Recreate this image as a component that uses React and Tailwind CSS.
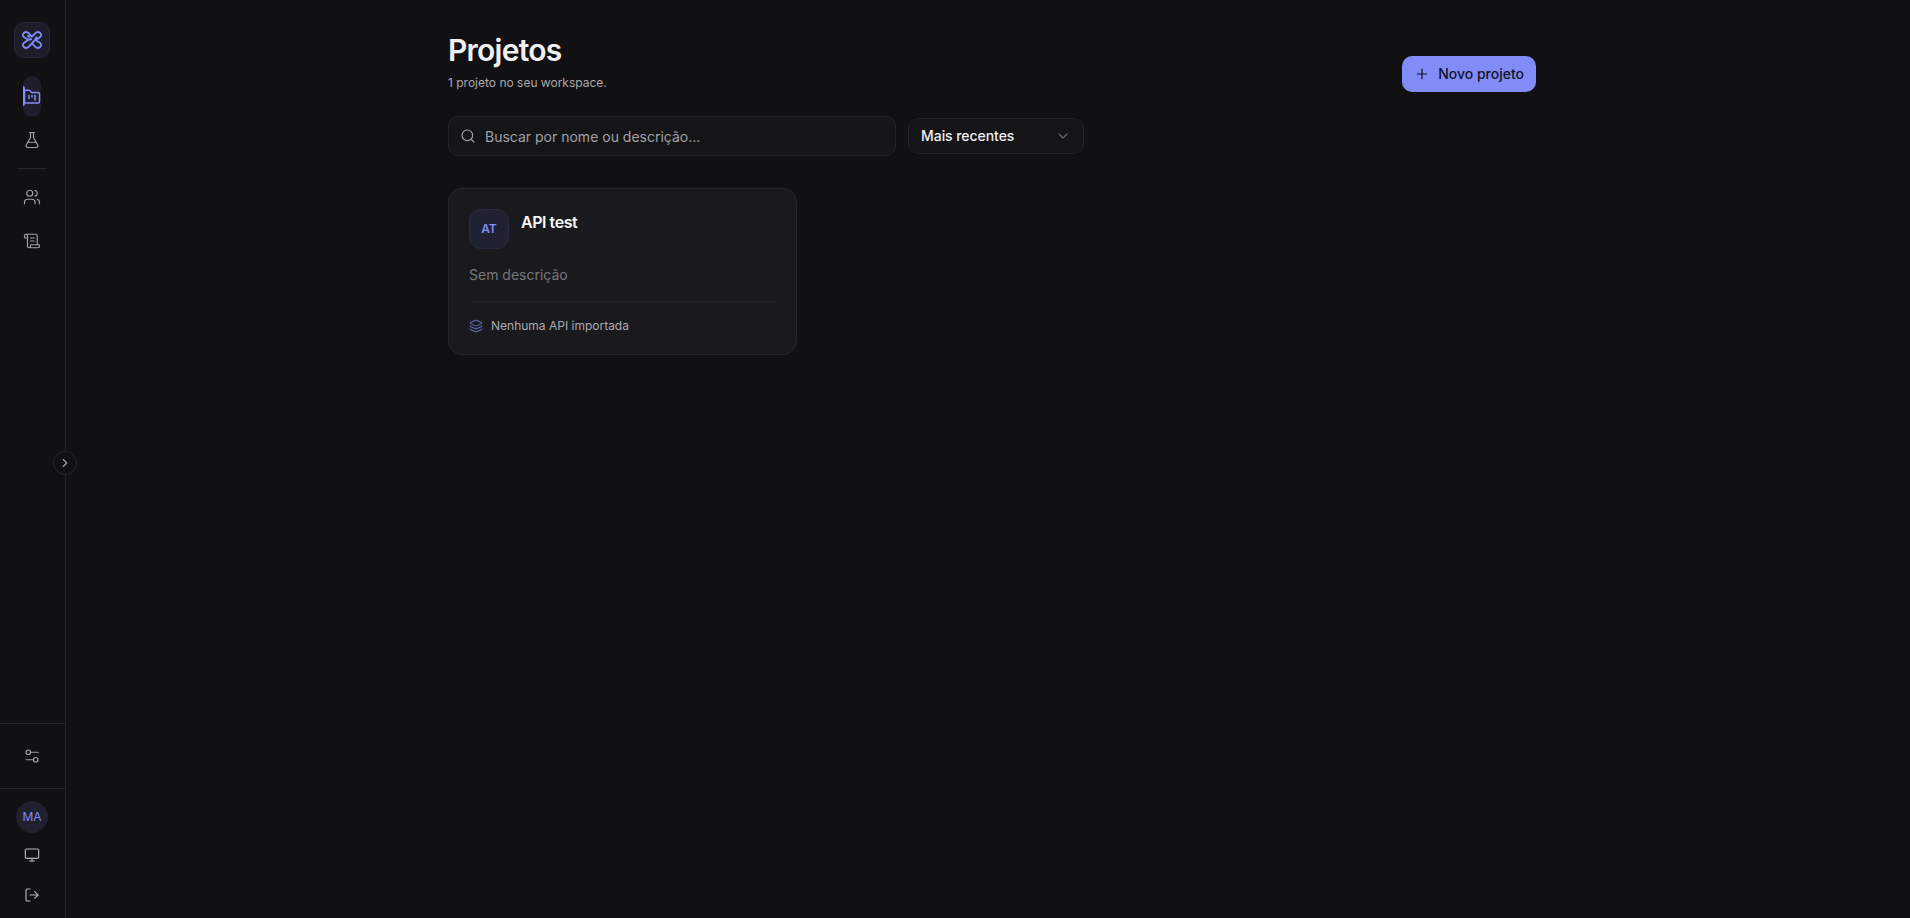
import { ChevronDown, ChevronRight, FlaskConical, FolderKanban, Layers, LogOut, Monitor, Plus, ScrollText, Search, Users } from 'lucide-react';

function Logo() {
  return (
    <svg width="22" height="22" viewBox="0 0 24 24" fill="none" stroke="currentColor" strokeWidth="2" strokeLinecap="round" strokeLinejoin="round" className="shrink-0">
      <path d="M9.300 8.800 7.600 7.400M12 8.300 8.600 4.700C7 3.100 4.700 3 3.200 4.300 1.600 5.800 1.800 8.200 3.800 9.300L8 11.700 3.800 14.700c-2 1.100-2.200 3.500-.6 5 1.500 1.300 3.800 1.200 5.400-.4L15.500 11.500 17 9" />
      <path d="M12 8.300 15.400 4.700c1.600-1.600 3.900-1.700 5.400-.4 1.600 1.500 1.400 3.900-.6 5L16 12.300l4.200 2.400c2 1.100 2.200 3.500.6 5-1.500 1.300-3.800 1.200-5.400-.4L12 15.700M8 11.700l3.200-.5" />
    </svg>
  );
}

function Sliders({ size, strokeWidth }) {
  return (
    <svg width={size} height={size} viewBox="0 0 24 24" fill="none" stroke="currentColor" strokeWidth={strokeWidth} strokeLinecap="round" strokeLinejoin="round">
      <path d="M20.500 7H10M14 17H4" />
      <circle cx="7" cy="7" r="3" />
      <circle cx="17" cy="17" r="3" />
    </svg>
  );
}

function NavIcon({ icon: Icon }) {
  return (
    <a className="flex h-11 w-full items-center justify-center text-[#a1a1a6]">
      <Icon size={18} strokeWidth={1.6} />
    </a>
  );
}

function Sidebar() {
  return (
    <aside className="relative flex h-full w-[66px] shrink-0 flex-col border-r border-[#252528] bg-[#111113]">
      <div className="flex h-[76px] w-16 justify-center pt-[22px]">
        <div className="flex size-9 items-center justify-center rounded-[10px] border border-[#29293a] bg-[#1c1d29] text-[#818cf8]">
          <Logo />
        </div>
      </div>
      <nav className="flex w-16 flex-col items-center">
        <a className="relative mb-px flex h-[41px] w-[18px] items-center justify-center rounded-full bg-[#1d1e2a] text-[#818cf8]">
          <span className="absolute left-0 top-[10px] h-5 w-0.5 rounded-r-full bg-[#818cf8]" />
          <FolderKanban size={18} strokeWidth={2} className="shrink-0" />
        </a>
        <NavIcon icon={FlaskConical} />
        <div className="my-[6px] h-px w-[30px] bg-[#28282b]" />
        <NavIcon icon={Users} />
        <NavIcon icon={ScrollText} />
      </nav>
      <div className="mt-auto flex h-[65px] items-center border-t border-[#252528]">
        <div className="w-16">
          <NavIcon icon={Sliders} />
        </div>
      </div>
      <div className="flex h-[130px] flex-col border-t border-[#252528]">
        <div className="flex w-16 flex-col items-center pt-3 text-[#b4b4b8]">
          <div className="flex size-8 items-center justify-center rounded-full bg-[#20212f] text-xs font-normal text-[#818cf8]">MA</div>
          <span className="mt-1 flex size-9 items-center justify-center"><Monitor size={16} strokeWidth={1.75} /></span>
          <span className="mt-1 flex size-9 items-center justify-center"><LogOut size={16} strokeWidth={1.75} /></span>
        </div>
      </div>
      <button className="absolute -right-3 top-[451px] flex size-6 items-center justify-center rounded-full border border-[#252528] bg-[#111113] text-[#a1a1a6]">
        <ChevronRight size={14} strokeWidth={2} />
      </button>
    </aside>
  );
}

function ProjectCard() {
  return (
    <article className="mt-8 h-[167px] w-[349px] rounded-[14px] border border-[#27272a] bg-[#1a1a1e] px-5 pt-5">
      <div className="flex gap-3">
        <div className="flex size-10 items-center justify-center rounded-xl border border-[#2a2a40] bg-[#212231] text-xs font-semibold text-[#818cf8]">AT</div>
        <h2 className="pt-[3px] text-base leading-5 font-semibold tracking-[-0.45px] text-[#fafafa]">API test</h2>
      </div>
      <p className="mt-4 text-sm leading-5 text-[#77777b]">Sem descrição</p>
      <div className="mt-4 flex items-center gap-2 border-t border-[#212124] pt-4 text-xs leading-4 text-[#a9a9ae]">
        <Layers size={14} strokeWidth={1.75} className="text-[#646bb8]" />
        <span>Nenhuma API importada</span>
      </div>
    </article>
  );
}

export default function App() {
  return (
    <div className="flex h-screen w-screen overflow-hidden bg-[#111113] font-['Inter',sans-serif] text-[#fafafa]">
      <Sidebar />
      <main className="flex flex-1 justify-center pl-2">
        <div className="w-[1088px] pt-8">
          <header className="flex items-end justify-between">
            <div>
              <h1 className="text-[30px] leading-9 font-semibold tracking-[-0.75px] text-[#f0f0f0]">Projetos</h1>
              <p className="mt-1.5 text-xs leading-[18px] text-[#a9a9ae]">1 projeto no seu workspace.</p>
            </div>
            <button className="flex h-9 items-center gap-2 rounded-[10px] bg-[#818cf8] px-3 text-sm font-medium text-[#111128]">
              <Plus size={16} strokeWidth={1.75} />
              Novo projeto
            </button>
          </header>
          <div className="mt-6 flex items-center gap-3">
            <label className="flex h-10 w-[448px] items-center gap-[9px] rounded-[10px] border border-[#232326] bg-[#151517] pr-3 pl-[11px] text-sm text-[#a1a1a6]">
              <Search size={16} strokeWidth={1.75} />
              <span className="pt-0.5">Buscar por nome ou descrição...</span>
            </label>
            <button className="flex h-9 w-44 items-center justify-between rounded-[10px] border border-[#232326] bg-[#151517] px-3 text-sm font-medium tracking-[-0.05px] text-[#f0f0f0]">
              Mais recentes
              <ChevronDown size={16} strokeWidth={1.75} className="text-[#66666a]" />
            </button>
          </div>
          <ProjectCard />
        </div>
      </main>
    </div>
  );
}
